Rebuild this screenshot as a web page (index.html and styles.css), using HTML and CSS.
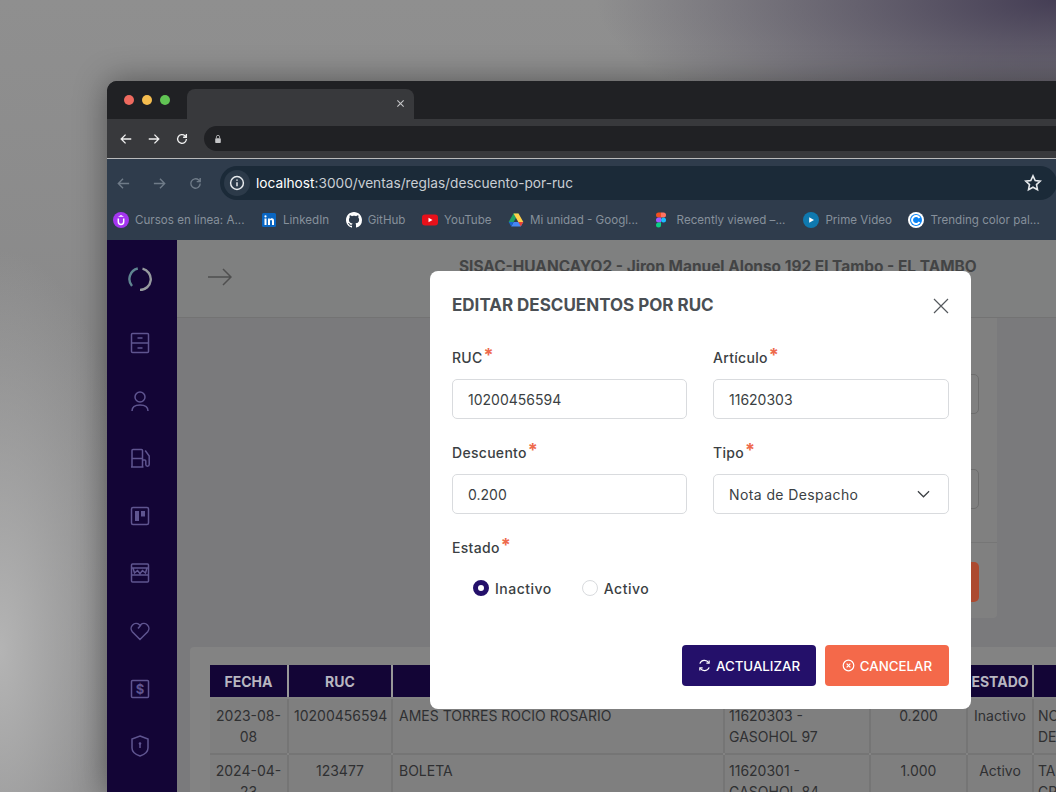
FILE: index.html
```html
<!DOCTYPE html>
<html lang="es">
<head>
    <meta charset="UTF-8">
    <meta name="viewport" content="width=device-width, initial-scale=1.0">
    <title>Descuentos por RUC</title>
    <link rel="stylesheet" href="styles.css">
</head>
<body>
    <div class="window">
        <div class="tabstrip">
            <div class="lights"><i class="red"></i><i class="yellow"></i><i class="green"></i></div>
            <div class="tab">
                <svg class="tab-close" viewBox="0 0 10 10"><path d="M1.5 1.5l7 7M8.5 1.5l-7 7"/></svg>
            </div>
        </div>
        <div class="toolbar">
            <svg class="nav-icon" viewBox="0 0 16 16"><path d="M14 8H2.5M7.5 3L2.5 8l5 5"/></svg>
            <svg class="nav-icon" viewBox="0 0 16 16"><path d="M2 8h11.5M8.5 3l5 5-5 5"/></svg>
            <svg class="nav-icon" viewBox="0 0 16 16"><path d="M13 8a5 5 0 1 1-1.6-3.7L13 6M13 2.2V6H9.3"/></svg>
            <div class="outer-url">
                <svg class="lock" viewBox="0 0 10 12"><path d="M3 5V3.4a2 2 0 0 1 4 0V5" fill="none" stroke="#c4c5c7" stroke-width="1"/><rect x="1.5" y="5" width="7" height="6" rx="1" fill="#c4c5c7"/></svg>
            </div>
        </div>
        <div class="inner-chrome">
            <div class="inner-toolbar">
                <svg class="nav-icon dim" viewBox="0 0 16 16"><path d="M14 8H2.5M7.5 3L2.5 8l5 5"/></svg>
                <svg class="nav-icon dim" viewBox="0 0 16 16"><path d="M2 8h11.5M8.5 3l5 5-5 5"/></svg>
                <svg class="nav-icon dim" viewBox="0 0 16 16"><path d="M13 8a5 5 0 1 1-1.6-3.7L13 6M13 2.2V6H9.3"/></svg>
                <div class="url-bar">
                    <span class="info-badge">
                        <svg viewBox="0 0 16 16"><circle cx="8" cy="8" r="6.4"/><path d="M8 7.2v4M8 4.4v1.4"/></svg>
                    </span>
                    <span class="url"><b>localhost</b>:3000/ventas/reglas/descuento-por-ruc</span>
                    <svg class="star" viewBox="0 0 18 18"><path d="M9 1.8l2.2 4.7 5.1.6-3.8 3.5 1 5.1L9 13.2l-4.5 2.5 1-5.1L1.7 7.1l5.1-.6z"/></svg>
                </div>
            </div>
            <div class="bookmarks">
                <div class="bookmark">
                    <svg viewBox="0 0 16 16"><circle cx="8" cy="8" r="8" fill="#a435f0"/><path d="M5.3 6.5v3.3a2.7 2.7 0 0 0 5.4 0V6.5" fill="none" stroke="#fff" stroke-width="1.5"/><path d="M8 3l3 1.7H5z" fill="#fff"/></svg>
                    <span>Cursos en línea: A...</span>
                </div>
                <div class="bookmark">
                    <svg viewBox="0 0 16 16"><rect x="1" y="1" width="14" height="14" rx="1.5" fill="#0a66c2"/><path d="M3.5 6.5h2V13h-2zM3.4 4.4a1.1 1.1 0 1 1 2.2 0 1.1 1.1 0 0 1-2.2 0zM7 6.5h1.9v.9c.4-.6 1.1-1.1 2-1.1 1.7 0 2.1 1.1 2.1 2.7V13h-2V9.5c0-.8-.2-1.5-1-1.500S9 8.600 9 9.500V13H7z" fill="#fff"/></svg>
                    <span>LinkedIn</span>
                </div>
                <div class="bookmark">
                    <svg viewBox="0 0 16 16"><path fill="#fff" d="M8 0C3.58 0 0 3.58 0 8c0 3.54 2.29 6.53 5.47 7.59.4.07.55-.17.55-.38 0-.19-.01-.82-.01-1.49-2.01.37-2.53-.49-2.69-.94-.09-.23-.48-.94-.82-1.13-.28-.15-.68-.52-.01-.53.63-.01 1.08.58 1.23.82.72 1.21 1.87.87 2.33.66.07-.52.28-.87.51-1.07-1.78-.2-3.64-.89-3.64-3.95 0-.87.31-1.59.82-2.15-.08-.2-.36-1.02.08-2.12 0 0 .67-.21 2.2.82.64-.18 1.32-.27 2-.27s1.36.09 2 .27c1.53-1.04 2.2-.82 2.2-.82.44 1.1.16 1.92.08 2.12.51.56.82 1.27.82 2.15 0 3.07-1.87 3.75-3.65 3.95.29.25.54.73.54 1.48 0 1.07-.01 1.93-.01 2.2 0 .21.15.46.55.38A8.01 8.01 0 0 0 16 8c0-4.42-3.58-8-8-8z"/></svg>
                    <span>GitHub</span>
                </div>
                <div class="bookmark">
                    <svg viewBox="0 0 16 16"><rect y="2.5" width="16" height="11" rx="3" fill="#e8101a"/><path d="M6.5 5.8L10.5 8l-4 2.2z" fill="#fff"/></svg>
                    <span>YouTube</span>
                </div>
                <div class="bookmark">
                    <svg viewBox="0 0 16 16"><path d="M5.5 1.5h5L5.6 10H.7z" fill="#1fa463"/><path d="M10.5 1.5L15.3 10h-5L5.5 1.5z" fill="#ffd04b"/><path d="M3.2 14.5L5.6 10h9.7l-2.5 4.5z" fill="#4687f4"/><path d="M.7 10h4.9l-2.4 4.5z" fill="#1967d2"/><path d="M15.3 10h-5l2.5 4.500z" fill="#e94335"/></svg>
                    <span>Mi unidad - Googl...</span>
                </div>
                <div class="bookmark figma-mark">
                    <svg viewBox="0 0 12 16"><path d="M3.5.5H6v5H3.5a2.5 2.5 0 0 1 0-5z" fill="#f24e1e"/><path d="M6 .5h2.5a2.5 2.5 0 0 1 0 5H6z" fill="#ff7262"/><path d="M3.5 5.500H6v5H3.5a2.5 2.5 0 0 1 0-5z" fill="#a259ff"/><circle cx="8.5" cy="8" r="2.5" fill="#1abcfe"/><path d="M3.5 10.5H6V13a2.5 2.5 0 1 1-2.5-2.500z" fill="#0acf83"/></svg>
                    <span>Recently viewed –...</span>
                </div>
                <div class="bookmark">
                    <svg viewBox="0 0 16 16"><circle cx="8" cy="8" r="8" fill="#0f79af"/><path d="M6.2 5.2L11 8l-4.8 2.8z" fill="#fff"/></svg>
                    <span>Prime Video</span>
                </div>
                <div class="bookmark">
                    <svg viewBox="0 0 16 16"><circle cx="8" cy="8" r="8" fill="#fff"/><circle cx="8" cy="8" r="6" fill="#0a84f5"/><path d="M11.5 6a4 4 0 1 0 0 4" fill="none" stroke="#fff" stroke-width="2"/></svg>
                    <span>Trending color pal...</span>
                </div>
                <svg class="bookmark-next" viewBox="0 0 16 16"><circle cx="8" cy="8" r="8" fill="#2f8fd6"/></svg>
            </div>
        </div>
        <div class="app">
            <nav class="sidebar">
                <svg class="logo" viewBox="0 0 24 24"><path d="M9.8 1.500A10.800 10.800 0 0 0 4 19" stroke="#5f8590"/><path d="M14.500 1.700A10.800 10.800 0 0 1 12 23" stroke="#969a9e"/></svg>
                <svg class="side-icon" viewBox="0 0 20 22"><rect x="1.5" y="1.5" width="17" height="19" rx="1"/><path d="M1.5 11h17M7.5 6h5M7.5 16h5"/></svg>
                <svg class="side-icon" viewBox="0 0 20 22"><circle cx="10" cy="7" r="5"/><path d="M2 21c0-4 3.5-6 8-6s8 2 8 6"/></svg>
                <svg class="side-icon" viewBox="0 0 20 22"><path d="M2 20V3.5a1 1 0 0 1 1-1h8.5a1 1 0 0 1 1 1V20M2 11.5h10.5M1 20h12.5M12.5 13h2.3a1 1 0 0 1 1 1v3.5a1.700 1.700 0 0 0 3.400 0V9l-4-5.500"/></svg>
                <svg class="side-icon" viewBox="0 0 20 22"><rect x="1.5" y="2.5" width="17" height="17" rx="1.5"/><rect x="5" y="6" width="4" height="10" class="solid"/><rect x="11" y="6" width="4" height="5.5" class="solid"/></svg>
                <svg class="side-icon" viewBox="0 0 20 22"><rect x="1.5" y="2" width="17" height="18" rx="1"/><path d="M1.5 6h17M3 6l1.5 5 3-2.500 2.500 3 2.500-3 3 2.500L17 6M1.500 13h17"/></svg>
                <svg class="side-icon" viewBox="0 0 20 22"><path d="M10 19.500L2.300 11.700a5 5 0 0 1 7.100-7L10 5.300l.6-.6a5 5 0 0 1 7.100 7z"/><path d="M11 5L8 8.500"/></svg>
                <svg class="side-icon" viewBox="0 0 20 22"><rect x="1.5" y="2.5" width="17" height="17" rx="1"/><text x="10" y="15.5" class="dollar">$</text></svg>
                <svg class="side-icon" viewBox="0 0 20 22"><path d="M10 1L18 4v9c0 3.500-3.500 6.500-8 8-4.500-1.500-8-4.500-8-8V4z"/><circle cx="10" cy="8.500" r="1.300" class="solid"/><path d="M10 9v4"/></svg>
            </nav>
            <div class="content">
                <header class="app-header">
                    <svg class="menu-arrow" viewBox="0 0 24 18"><path d="M0 9h23M15 1l8 8-8 8"/></svg>
                    <h2>SISAC-HUANCAYO2 - Jiron Manuel Alonso 192 El Tambo - EL TAMBO</h2>
                </header>
                <main class="main">
                    <section class="filter-card">
                        <div class="filter-fields">
                            <div class="filter-input"></div>
                            <div class="filter-input"></div>
                        </div>
                        <div class="filter-actions"><div class="filter-button"></div></div>
                    </section>
                    <section class="table-card">
                        <table class="rules-table">
                            <colgroup>
                                <col class="c-fecha"><col class="c-ruc"><col class="c-name"><col class="c-art"><col class="c-desc"><col class="c-estado"><col class="c-tipo">
                            </colgroup>
                            <thead>
                                <tr><th>FECHA</th><th>RUC</th><th>RAZON SOCIAL</th><th>ARTICULO</th><th>DESCUENTO</th><th>ESTADO</th><th>TIPO</th></tr>
                            </thead>
                            <tbody>
                                <tr><td>2023-08-08</td><td>10200456594</td><td class="left name">AMES TORRES ROCIO ROSARIO</td><td class="left">11620303 - GASOHOL 97</td><td>0.200</td><td>Inactivo</td><td class="left">NOTA DE DESPACHO</td></tr>
                                <tr><td>2024-04-23</td><td>123477</td><td class="left name">BOLETA</td><td class="left">11620301 - GASOHOL 84</td><td>1.000</td><td>Activo</td><td class="left">TARJETA DE CREDITO</td></tr>
                            </tbody>
                        </table>
                    </section>
                </main>
            </div>
        </div>

        <div class="modal">
            <div class="modal-head">
                <h1>EDITAR DESCUENTOS POR RUC</h1>
                <svg class="modal-close" viewBox="0 0 16 16"><path d="M1 1l14 14M15 1L1 15"/></svg>
            </div>
            <form class="modal-form">
                <div class="field">
                    <label>RUC<sup>*</sup></label>
                    <input type="text" value="10200456594">
                </div>
                <div class="field">
                    <label>Artículo<sup>*</sup></label>
                    <input type="text" value="11620303">
                </div>
                <div class="field">
                    <label>Descuento<sup>*</sup></label>
                    <input type="text" value="0.200">
                </div>
                <div class="field">
                    <label>Tipo<sup>*</sup></label>
                    <div class="select">
                        <span>Nota de Despacho</span>
                        <svg viewBox="0 0 14 8"><path d="M1 1l6 6 6-6"/></svg>
                    </div>
                </div>
                <div class="field">
                    <label>Estado<sup>*</sup></label>
                    <div class="radios">
                        <label class="radio"><input type="radio" name="estado" checked>Inactivo</label>
                        <label class="radio"><input type="radio" name="estado">Activo</label>
                    </div>
                </div>
            </form>
            <div class="modal-actions">
                <button class="btn primary" type="button">
                    <svg viewBox="0 0 14 14"><path d="M2 5a5.3 5.3 0 0 1 9.5-1M12 9a5.3 5.3 0 0 1-9.5 1"/><path d="M12 1.5V4.5H9M2 12.5V9.5H5"/></svg>
                    ACTUALIZAR
                </button>
                <button class="btn danger" type="button">
                    <svg viewBox="0 0 14 14"><circle cx="7" cy="7" r="5.7"/><path d="M5 5l4 4M9 5L5 9"/></svg>
                    CANCELAR
                </button>
            </div>
        </div>
    </div>
</body>
</html>
```
FILE: styles.css
```css
* {
    margin: 0;
    padding: 0;
    box-sizing: border-box;
}
html, body {
    height: 100%;
    overflow: hidden;
}
body {
    position: relative;
    font-family: Inter, "Liberation Sans", sans-serif;
    background:
        radial-gradient(460px 150px at 1056px 0, #453e55 0%, rgba(69,62,85,0) 100%),
        radial-gradient(150px 400px at 0 650px, #b4b4b4 0%, rgba(180,180,180,0) 100%),
        linear-gradient(180deg, #8f8f8f 0, #828283 100%);
}
.window {
    position: absolute;
    left: 107px;
    top: 81px;
    width: 1060px;
    height: 711px;
    border-radius: 10px 10px 0 0;
    overflow: hidden;
    background: #202124;
    box-shadow: 0 0 32px rgba(0,0,0,0.4);
    display: flex;
    flex-direction: column;
}

/* outer chrome */
.tabstrip {
    height: 38px;
    display: flex;
    align-items: flex-end;
    background: #202124;
    flex-shrink: 0;
}
.lights {
    width: 80px;
    display: flex;
    gap: 8px;
    padding-left: 17px;
    align-self: flex-start;
    margin-top: 14px;
}
.lights i {
    width: 10px;
    height: 10px;
    border-radius: 50%;
}
.red { background: #ee6a5f; }
.yellow { background: #f5bd4f; }
.green { background: #61c454; }
.tab {
    width: 227px;
    height: 30px;
    background: #38393c;
    border-radius: 8px 8px 0 0;
    display: flex;
    justify-content: flex-end;
    align-items: center;
    padding: 0 9px 2px 0;
}
.tab-close {
    width: 9px;
    height: 9px;
    fill: none;
    stroke: #c5c6c8;
    stroke-width: 1.2;
}
.toolbar {
    height: 40px;
    background: #38393c;
    display: flex;
    align-items: center;
    gap: 14px;
    padding-left: 12px;
    flex-shrink: 0;
    border-bottom: 1px solid #b9babb;
}
.nav-icon {
    width: 14px;
    height: 14px;
    fill: none;
    stroke: #f0f0f0;
    stroke-width: 1.5;
    flex-shrink: 0;
}
.nav-icon.dim {
    stroke: #6f7b88;
    width: 15px;
    height: 15px;
}
.outer-url {
    flex-grow: 1;
    height: 25px;
    margin-left: 1px;
    border-radius: 13px 0 0 13px;
    background: #202124;
    display: flex;
    align-items: center;
    padding-left: 10px;
}
.lock {
    width: 8px;
    height: 10px;
}
.inner-chrome {
    height: 81px;
    background: #2f3c4c;
    flex-shrink: 0;
}
.inner-toolbar {
    height: 46px;
    display: flex;
    align-items: center;
    gap: 21px;
    padding: 2px 0 0 9px;
}
.url-bar {
    width: 837px;
    height: 34px;
    margin-left: -4px;
    border-radius: 17px;
    background: #1b2a38;
    display: flex;
    align-items: center;
    padding: 0 15px 0 4px;
    font-size: 13.7px;
    color: #c9ced4;
}
.info-badge {
    width: 26px;
    height: 26px;
    border-radius: 50%;
    background: #2c3a49;
    display: flex;
    align-items: center;
    justify-content: center;
    margin-right: 6px;
}
.info-badge svg {
    width: 16px;
    height: 16px;
    fill: none;
    stroke: #e6e9ec;
    stroke-width: 1.5;
}
.url b {
    color: #fff;
    font-weight: 400;
}
.star {
    width: 18px;
    height: 18px;
    margin-left: auto;
    fill: none;
    stroke: #e6e9ec;
    stroke-width: 1.6;
}
.bookmarks {
    display: flex;
    align-items: center;
    gap: 16.5px;
    padding-left: 6px;
    height: 29px;
    white-space: nowrap;
    font-size: 11.6px;
    color: #86909b;
}
.bookmark {
    display: flex;
    align-items: center;
    gap: 6px;
    flex-shrink: 0;
}
.bookmark svg {
    width: 16px;
    height: 16px;
    flex-shrink: 0;
}
.bookmark.figma-mark {
    gap: 10px;
    margin-right: 1.5px;
}
.bookmark.figma-mark svg {
    width: 12px;
}
.bookmark-next {
    width: 16px;
    height: 16px;
    flex-shrink: 0;
}

/* app behind the dialog, already dimmed */
.app {
    flex-grow: 1;
    display: flex;
    min-height: 0;
}
.sidebar {
    width: 70px;
    background: #130536;
    display: flex;
    flex-direction: column;
    align-items: center;
    padding: 27px 5px 0 0;
    gap: 35.6px;
    flex-shrink: 0;
}
.logo {
    width: 24px;
    height: 24px;
    fill: none;
    stroke-width: 2.4;
    margin-bottom: 5.4px;
    flex-shrink: 0;
}
.side-icon {
    width: 20px;
    height: 22px;
    flex-shrink: 0;
    fill: none;
    stroke: #5f5590;
    stroke-width: 1.5;
}
.side-icon .solid {
    fill: #5f5590;
    stroke: none;
}
.dollar {
    fill: #5f5590;
    stroke: none;
    font: 700 13px Inter, sans-serif;
    text-anchor: middle;
}
.content {
    flex-grow: 1;
    background: #7a7a7c;
    min-width: 0;
}
.app-header {
    height: 78px;
    background: #7f8080;
    border-bottom: 1px solid #737373;
    display: flex;
    padding: 18px 0 0 31px;
}
.menu-arrow {
    width: 24px;
    height: 18px;
    margin-top: 10px;
    fill: none;
    stroke: #4f4f4f;
    stroke-width: 1.5;
}
.app-header h2 {
    width: 518px;
    margin-left: 227px;
    font-size: 15.45px;
    line-height: 18px;
    font-weight: 700;
    white-space: nowrap;
    color: #434445;
}
.main {
    padding-left: 13px;
}
.filter-card {
    width: 420px;
    height: 300px;
    margin-left: 387px;
    background: #808080;
    border-radius: 0 0 4px 4px;
    display: flex;
    flex-direction: column;
    align-items: flex-end;
}
.filter-fields {
    height: 225px;
    width: 100%;
    padding: 56px 18px 0 0;
    border-bottom: 1px solid #767676;
    display: flex;
    flex-direction: column;
    align-items: flex-end;
    gap: 55px;
}
.filter-input {
    width: 235px;
    height: 40px;
    border: 1px solid #6d6d6d;
    border-radius: 5px;
}
.filter-actions {
    padding: 19px 18px 0 0;
}
.filter-button {
    width: 120px;
    height: 40px;
    border-radius: 5px;
    background: #ac4a30;
}
.table-card {
    margin-top: 29px;
    height: 200px;
    padding: 18px 0 0 18px;
    background: #838383;
    border-radius: 4px 0 0 0;
}
.rules-table {
    table-layout: fixed;
    width: 846px;
    border-spacing: 2px;
    margin-top: -2px;
    font-size: 14px;
    line-height: 21px;
    color: #2f3032;
}
.c-fecha { width: 77px; }
.c-ruc { width: 102px; }
.c-name { width: 330px; }
.c-art { width: 144px; }
.c-desc { width: 95px; }
.c-estado { width: 64px; }
.c-tipo { width: 120px; }
.rules-table th {
    height: 32px;
    background: #130536;
    color: #b8b6c0;
    font-weight: 700;
    font-size: 14px;
    box-shadow: 2px 0 0 #989898;
}
.rules-table td {
    padding: 6px 5px;
    background: #7f7f7f;
    text-align: center;
    vertical-align: top;
    box-shadow: 2px 0 0 #757575, 0 2px 0 #757575;
}
.rules-table tbody tr:last-child td {
    padding-top: 5px;
}
.rules-table td.left {
    text-align: left;
    padding-left: 4px;
}
.rules-table td.name {
    padding-left: 6px;
}

/* dialog */
.modal {
    position: absolute;
    left: 323px;
    top: 190px;
    width: 541px;
    height: 438px;
    padding: 0 22px;
    background: #fff;
    border-radius: 8px;
    color: #3b3f43;
}
.modal-head {
    height: 70px;
    padding-bottom: 2px;
    display: flex;
    align-items: center;
    justify-content: space-between;
}
.modal-head h1 {
    font-size: 17px;
    font-weight: 700;
    color: #4a4f54;
}
.modal-close {
    width: 16px;
    height: 16px;
    margin-top: 2px;
    fill: none;
    stroke: #55595d;
    stroke-width: 1.2;
}
.modal-form {
    display: grid;
    grid-template-columns: 235px 236px;
    column-gap: 26px;
    row-gap: 17px;
    height: 304px;
    align-content: start;
}
.field > label {
    display: block;
    height: 38px;
    padding-top: 5px;
    font-size: 14px;
    line-height: 24px;
    font-weight: 500;
    letter-spacing: 0.3px;
    color: #3b3f43;
}
.field sup {
    font-size: 18px;
    font-weight: 700;
    line-height: 0;
    color: #ee6a4c;
    margin-left: 1px;
    vertical-align: 2px;
}
.field input[type="text"], .select {
    width: 100%;
    height: 40px;
    border: 1px solid #d9dbde;
    border-radius: 5px;
    padding: 0 15px;
    font-family: inherit;
    font-size: 14px;
    color: #3b3f43;
    background: #fff;
}
.select {
    display: flex;
    align-items: center;
    justify-content: space-between;
    padding-right: 18px;
    letter-spacing: 0.4px;
}
.select svg {
    width: 13px;
    height: 8px;
    fill: none;
    stroke: #3b3f43;
    stroke-width: 1.3;
}
.radios {
    display: flex;
    gap: 30px;
    padding: 7px 0 0 21px;
    height: 40px;
}
.radio {
    display: flex;
    align-items: center;
    gap: 6px;
    height: 24px;
    font-size: 14px;
    font-weight: 500;
    letter-spacing: 0.5px;
}
.radio input {
    appearance: none;
    width: 16px;
    height: 16px;
    border: 1px solid #d9dbde;
    border-radius: 50%;
    background: #fff;
}
.radio input:checked {
    border: 5px solid #24106a;
}
.modal-actions {
    display: flex;
    justify-content: flex-end;
    gap: 9px;
}
.btn {
    height: 41px;
    border: none;
    border-radius: 4px;
    color: #fff;
    font-family: inherit;
    font-size: 13.3px;
    font-weight: 500;
    display: flex;
    align-items: center;
    justify-content: center;
    gap: 5px;
}
.btn svg {
    width: 13px;
    height: 13px;
    fill: none;
    stroke: #fff;
    stroke-width: 1.3;
}
.btn.primary {
    width: 134px;
    background: #24106a;
}
.btn.danger {
    width: 124px;
    background: #f4694a;
}
```
